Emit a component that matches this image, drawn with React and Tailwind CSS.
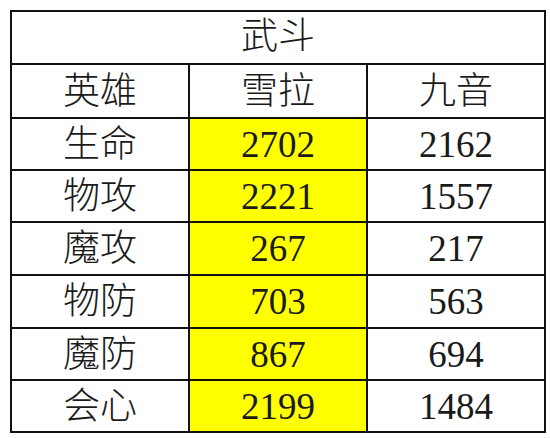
const ROWS = [
  { name: "生命", a: "2702", b: "2162", h: "h-[52px]" },
  { name: "物攻", a: "2221", b: "1557", h: "h-[52px]" },
  { name: "魔攻", a: "267", b: "217", h: "h-[53px]" },
  { name: "物防", a: "703", b: "563", h: "h-[53px]" },
  { name: "魔防", a: "867", b: "694", h: "h-[52px]" },
  { name: "会心", a: "2199", b: "1484", h: "h-[52px]" },
];

const cell = "border-2 border-[#111] text-center align-middle p-0 leading-none";

export default function App() {
  return (
    <div
      className="w-[550px] h-[438px] bg-white pt-[10px] pl-[10px] overflow-hidden text-[#1a1a1a]"
      style={{ fontFamily: '"Liberation Serif", "Noto Sans CJK SC", serif' }}
    >
      <table className="border-collapse table-fixed w-[535px] text-[37px] font-light">
        <colgroup>
          <col className="w-[178px]" />
          <col className="w-[178px]" />
          <col className="w-[178px]" />
        </colgroup>
        <tbody>
          <tr className="h-[53px]">
            <td colSpan={3} className={cell + " pb-[2px]"}>
              武斗
            </td>
          </tr>
          <tr className="h-[54px]">
            <td className={cell}>英雄</td>
            <td className={cell}>雪拉</td>
            <td className={cell}>九音</td>
          </tr>
          {ROWS.map((row) => (
            <tr key={row.name} className={row.h}>
              <td className={cell}>{row.name}</td>
              <td className={cell + " bg-[#ffff00]"}>{row.a}</td>
              <td className={cell}>{row.b}</td>
            </tr>
          ))}
        </tbody>
      </table>
    </div>
  );
}
